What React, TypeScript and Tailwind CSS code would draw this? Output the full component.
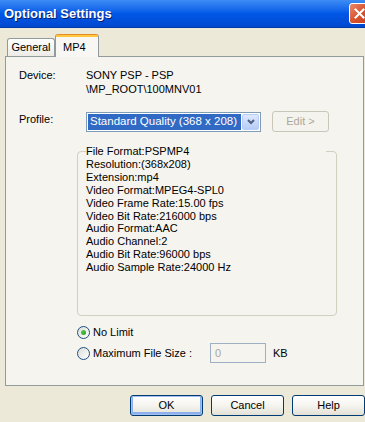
const SPECS = [
  "File Format:PSPMP4",
  "Resolution:(368x208)",
  "Extension:mp4",
  "Video Format:MPEG4-SPL0",
  "Video Frame Rate:15.00 fps",
  "Video Bit Rate:216000 bps",
  "Audio Format:AAC",
  "Audio Channel:2",
  "Audio Bit Rate:96000 bps",
  "Audio Sample Rate:24000 Hz",
];

function Radio({ checked }: { checked?: boolean }) {
  return (
    <span className="w-[13px] h-[13px] shrink-0 rounded-full border border-[#1C5180] bg-gradient-to-br from-[#DCDCD7] to-white flex items-center justify-center">
      {checked && <span className="w-[5px] h-[5px] rounded-full bg-gradient-to-br from-[#55D051] to-[#21A121]" />}
    </span>
  );
}

function XpButton({ label, isDefault }: { label: string; isDefault?: boolean }) {
  return (
    <button
      className={
        "w-[73px] h-[21px] rounded-[3px] border border-[#003C74] bg-gradient-to-b from-white via-[#F5F4EF] to-[#E3E1D6] text-[11px] text-black " +
        (isDefault ? "shadow-[inset_0_0_0_1px_#A4BFF0,inset_0_-1px_0_2px_#8DB0EC]" : "")
      }
    >
      {label}
    </button>
  );
}

export default function App() {
  return (
    <div className="w-[365px] h-[422px] overflow-hidden bg-[#ECE9D8] flex flex-col text-[11px] text-black font-['Liberation_Sans',Arial,sans-serif]">
      {/* Title bar */}
      <div className="h-[28px] shrink-0 flex items-center pl-[4px] bg-gradient-to-b from-[#3D8CF5] via-[#0058E6] to-[#0048D0] border-b border-[#0038A8]">
        <span className="flex-1 text-white font-bold text-[13px] [text-shadow:1px_1px_0_#0A1E6A]">Optional Settings</span>
        <span className="w-[21px] h-[21px] shrink-0 mr-[-5px] rounded-[3px] border border-white bg-gradient-to-br from-[#E9896D] via-[#D9532E] to-[#C0411E] flex items-center justify-center">
          <svg width="11" height="11" viewBox="0 0 11 11">
            <path d="M1.5 1.5l8 8M9.5 1.5l-8 8" stroke="white" strokeWidth="2" strokeLinecap="square" />
          </svg>
        </span>
      </div>

      {/* Tabs */}
      <div className="flex items-end pl-[7px] pt-[6px] h-[28px] shrink-0">
        <div className="w-[48px] h-[18px] border border-b-0 border-[#919B9C] rounded-t-[3px] bg-gradient-to-b from-white to-[#ECEBE6] flex items-center justify-center">
          General
        </div>
        <div className="relative z-10 w-[44px] h-[23px] -mb-[1px] border-x border-[#919B9C] rounded-t-[3px] bg-[#F8F7F3] flex flex-col">
          <div className="h-[3px] rounded-t-[2px] bg-[#FFC83C] border-t border-[#E68B2C]" />
          <div className="flex-1 flex items-start pl-[7px] pt-[2px]">MP4</div>
        </div>
      </div>

      {/* Panel */}
      <div className="ml-[5px] w-[359px] h-[330px] shrink-0 border border-[#919B9C] bg-[#F5F4EF] flex flex-col">
        <div className="flex pl-[13px] pt-[11px] leading-[14px]">
          <span className="w-[67px]">Device:</span>
          <div className="flex flex-col">
            <span>SONY PSP - PSP</span>
            <span>\MP_ROOT\100MNV01</span>
          </div>
        </div>

        <div className="flex items-start pl-[13px] mt-[16px]">
          <span className="w-[67px] leading-[13px] pt-[1px]">Profile:</span>
          <div className="w-[175px] h-[20px] border border-[#7F9DB9] bg-white flex items-center p-[1px] gap-[1px]">
            <div className="flex-1 h-full bg-[#316AC5] text-white flex items-center pl-[2px] text-[11.5px]">
              Standard Quality (368 x 208)
            </div>
            <div className="w-[17px] h-full rounded-[2px] border border-[#B9CCF5] bg-gradient-to-b from-[#DDE8FE] to-[#B6CCF7] flex items-center justify-center">
              <svg width="8" height="6" viewBox="0 0 8 6">
                <path d="M1 1l3 3 3-3" stroke="#4D6185" strokeWidth="2" fill="none" />
              </svg>
            </div>
          </div>
          <div className="ml-[11px] w-[57px] h-[21px] -mt-[1px] rounded-[3px] border border-[#C9C7BA] bg-[#F4F3EE] text-[#ACA899] flex items-center justify-center">
            Edit &gt;
          </div>
        </div>

        {/* Format group */}
        <div className="ml-[71px] mt-[19px] w-[260px] h-[165px] shrink-0 border border-[#D0D0BF] rounded-[4px]">
          <div className="ml-[8px] mr-[10px] -mt-[7px] bg-[#F5F4EF] flex flex-col leading-[12.9px]">
            {SPECS.map((s) => (
              <span key={s}>{s}</span>
            ))}
          </div>
        </div>

        <div className="ml-[71px] mt-[10px] h-[13px] flex items-center gap-[3px]">
          <Radio checked />
          <span>No Limit</span>
        </div>
        <div className="ml-[71px] mt-[4px] h-[20px] flex items-center gap-[3px]">
          <Radio />
          <span className="w-[114px]">Maximum File Size :</span>
          <div className="w-[56px] h-[20px] border border-[#9FB0C4] bg-[#F5F4EF] text-[#ACA899] flex items-center pl-[4px]">0</div>
          <span className="ml-[4px]">KB</span>
        </div>
      </div>

      {/* Buttons */}
      <div className="flex gap-[8px] pl-[130px] mt-[9px]">
        <XpButton label="OK" isDefault />
        <XpButton label="Cancel" />
        <XpButton label="Help" />
      </div>
    </div>
  );
}
